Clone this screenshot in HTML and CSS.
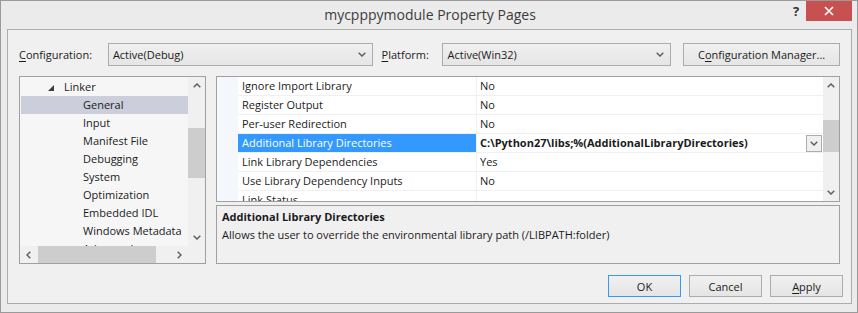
FILE: index.html
```html
<!DOCTYPE html>
<html lang="en">
<head>
  <meta charset="UTF-8" />
  <title>mycpppymodule Property Pages</title>
  <link rel="stylesheet" href="styles.css">
</head>
<body>
  <div class="window">
    <!-- Title bar -->
    <div class="titlebar">
      <div class="title">mycpppymodule Property Pages</div>
      <div class="help">?</div>
      <div class="close">
        <svg width="10" height="10" viewBox="0 0 10 10"><path d="M1 1 L9 9 M9 1 L1 9" stroke="#fff" stroke-width="1.6" fill="none"/></svg>
      </div>
    </div>

    <div class="client">
      <!-- Configuration / platform -->
      <div class="toolbar">
        <span class="lbl lbl-config"><u>C</u>onfiguration:</span>
        <div class="combo combo-config">
          <span>Active(Debug)</span>
          <svg class="chev" width="8" height="5"><use href="#chev-down"/></svg>
        </div>
        <span class="lbl lbl-platform"><u>P</u>latform:</span>
        <div class="combo combo-platform">
          <span>Active(Win32)</span>
          <svg class="chev" width="8" height="5"><use href="#chev-down"/></svg>
        </div>
        <div class="btn btn-manager">C<u>o</u>nfiguration Manager...</div>
      </div>

      <div class="main">
        <!-- Tree -->
        <div class="tree">
          <ul class="tree-list">
            <li class="node"><svg class="twisty" width="6" height="6" viewBox="0 0 6 6"><polygon points="6,0 6,6 0,6" fill="#3c3c3c"/></svg>Linker</li>
            <li class="leaf selected">General</li>
            <li class="leaf">Input</li>
            <li class="leaf">Manifest File</li>
            <li class="leaf">Debugging</li>
            <li class="leaf">System</li>
            <li class="leaf">Optimization</li>
            <li class="leaf">Embedded IDL</li>
            <li class="leaf">Windows Metadata</li>
            <li class="leaf">Advanced</li>
          </ul>
          <div class="vscroll tree-vscroll">
            <div class="arrow"><svg width="8" height="5"><use href="#chev-up"/></svg></div>
            <div class="thumb"></div>
            <div class="spacer"></div>
            <div class="arrow"><svg width="8" height="5"><use href="#chev-down"/></svg></div>
          </div>
          <div class="hscroll">
            <div class="arrow"><svg width="5" height="8"><use href="#chev-left"/></svg></div>
            <div class="thumb"></div>
            <div class="spacer"></div>
            <div class="arrow"><svg width="5" height="8"><use href="#chev-right"/></svg></div>
          </div>
          <div class="corner"></div>
        </div>

        <div class="right">
          <!-- Property grid -->
          <div class="props">
            <div class="prop-rows">
              <div class="row"><div class="gutter"></div><div class="name">Ignore Import Library</div><div class="value">No</div></div>
              <div class="row"><div class="gutter"></div><div class="name">Register Output</div><div class="value">No</div></div>
              <div class="row"><div class="gutter"></div><div class="name">Per-user Redirection</div><div class="value">No</div></div>
              <div class="row selected">
                <div class="gutter"></div>
                <div class="name">Additional Library Directories</div>
                <div class="value">
                  <span>C:\Python27\libs;%(AdditionalLibraryDirectories)</span>
                  <div class="drop"><svg width="8" height="5"><use href="#chev-down"/></svg></div>
                </div>
              </div>
              <div class="row"><div class="gutter"></div><div class="name">Link Library Dependencies</div><div class="value">Yes</div></div>
              <div class="row"><div class="gutter"></div><div class="name">Use Library Dependency Inputs</div><div class="value">No</div></div>
              <div class="row"><div class="gutter"></div><div class="name">Link Status</div><div class="value"></div></div>
            </div>
            <div class="vscroll props-vscroll">
              <div class="arrow"><svg width="8" height="5"><use href="#chev-up"/></svg></div>
              <div class="thumb"></div>
              <div class="spacer"></div>
              <div class="arrow"><svg width="8" height="5"><use href="#chev-down"/></svg></div>
            </div>
          </div>

          <!-- Description -->
          <div class="desc">
            <div class="desc-title">Additional Library Directories</div>
            <div class="desc-text">Allows the user to override the environmental library path (/LIBPATH:folder)</div>
          </div>
        </div>
      </div>

      <div class="actions">
        <div class="btn default">OK</div>
        <div class="btn">Cancel</div>
        <div class="btn"><u>A</u>pply</div>
      </div>
    </div>
  </div>

  <svg class="sprite">
    <symbol id="chev-down" viewBox="0 0 8 5"><polyline points="0.7,0.7 4,4 7.3,0.7" fill="none" stroke="#606060" stroke-width="1.5"/></symbol>
    <symbol id="chev-up" viewBox="0 0 8 5"><polyline points="0.7,4.3 4,1 7.3,4.3" fill="none" stroke="#606060" stroke-width="1.5"/></symbol>
    <symbol id="chev-left" viewBox="0 0 5 8"><polyline points="4.3,0.7 1,4 4.3,7.3" fill="none" stroke="#606060" stroke-width="1.5"/></symbol>
    <symbol id="chev-right" viewBox="0 0 5 8"><polyline points="0.7,0.7 4,4 0.7,7.3" fill="none" stroke="#606060" stroke-width="1.5"/></symbol>
  </svg>
</body>
</html>
```

FILE: styles.css
```css
:root {
  --frame: #ebebeb;
  --face: #f0f0f0;
  --border: #acacac;
  --panel-border: #a0a0a0;
  --text: #1b1b1b;
  --select: #3399ff;
  --thumb: #cdcdcd;
}

body {
  margin: 0;
  font-family: "Open Sans", "Noto Sans", sans-serif;
  font-size: 11px;
  color: var(--text);
}

u {
  text-decoration-thickness: 1px;
  text-underline-offset: 2px;
}

.sprite {
  display: none;
}

.window {
  width: 858px;
  height: 313px;
  box-sizing: border-box;
  border: 1px solid #9a9a9a;
  background: var(--frame);
  display: flex;
  flex-direction: column;
}

/* Title bar */
.titlebar {
  height: 28px;
  flex-shrink: 0;
  display: flex;
  align-items: flex-start;
}

.title {
  flex: 1;
  padding-left: 71px;
  text-align: center;
  font-size: 14px;
  line-height: 28px;
  color: #3c3c3c;
}

.help {
  width: 16px;
  margin-right: 2px;
  text-align: center;
  font-size: 13px;
  font-weight: 700;
  line-height: 20px;
  color: #333;
}

.close {
  width: 46px;
  height: 20px;
  margin-right: 5px;
  background: #c75050;
  display: flex;
  align-items: center;
  justify-content: center;
}

/* Client area */
.client {
  flex: 1;
  margin: 0 5px 8px 6px;
  border: 1px solid var(--border);
  background: var(--face);
  padding: 13px 11px 0 11px;
  display: flex;
  flex-direction: column;
}

.toolbar {
  display: flex;
  align-items: center;
  height: 23px;
}

.lbl-config { width: 89px; }
.lbl-platform { width: 61px; margin-left: 9px; }

.combo {
  height: 23px;
  box-sizing: border-box;
  border: 1px solid var(--border);
  background: linear-gradient(#f0f0f0, #e5e5e5);
  display: flex;
  align-items: center;
  justify-content: space-between;
  padding: 0 6px 0 4px;
}

.combo-config { width: 265px; }
.combo-platform { width: 229px; }

.btn {
  box-sizing: border-box;
  border: 1px solid var(--border);
  background: linear-gradient(#f0f0f0, #e5e5e5);
  display: flex;
  align-items: center;
  justify-content: center;
  width: 73px;
  height: 22px;
}

.btn-manager {
  width: 157px;
  height: 23px;
  margin-left: 12px;
}

.btn.default {
  border-color: var(--select);
}

.main {
  display: flex;
  gap: 10px;
  height: 188px;
  margin-top: 10px;
}

/* Tree */
.tree {
  width: 187px;
  box-sizing: border-box;
  border: 1px solid var(--panel-border);
  background: #f6f6f6;
  display: grid;
  grid-template-columns: 1fr 17px;
  grid-template-rows: 1fr 17px;
  overflow: hidden;
}

.tree-list {
  list-style: none;
  margin: 0;
  padding: 1px 0 0 1px;
  overflow: hidden;
  min-width: 0;
}

.tree-list li {
  height: 18px;
  line-height: 18px;
  white-space: nowrap;
}

.tree-list .node {
  padding-left: 27px;
}

.twisty {
  margin-right: 10px;
  vertical-align: 0;
}

.tree-list .leaf {
  padding-left: 62px;
}

.tree-list .selected {
  background: #cccedb;
}

.vscroll {
  background: var(--face);
  display: flex;
  flex-direction: column;
}

.vscroll .arrow {
  height: 17px;
  display: flex;
  align-items: center;
  justify-content: center;
}

.vscroll .spacer,
.hscroll .spacer {
  flex: 1;
}

.tree-vscroll .thumb {
  margin-top: 34px;
  height: 50px;
  background: var(--thumb);
}

.hscroll {
  background: var(--face);
  display: flex;
}

.hscroll .arrow {
  width: 17px;
  display: flex;
  align-items: center;
  justify-content: center;
}

.hscroll .thumb {
  margin-left: 1px;
  width: 118px;
  background: var(--thumb);
}

.corner {
  background: var(--face);
}

/* Property grid */
.right {
  flex: 1;
  display: flex;
  flex-direction: column;
  gap: 3px;
}

.props {
  height: 126px;
  box-sizing: border-box;
  border: 1px solid var(--panel-border);
  background: #fff;
  display: grid;
  grid-template-columns: 1fr 16px;
}

.prop-rows {
  overflow: hidden;
}

.row {
  display: grid;
  grid-template-columns: 21px 239px 1fr;
  height: 19px;
}

.gutter {
  background: #f4f7fc;
}

.name,
.value {
  border-bottom: 1px solid #f0f0f0;
  line-height: 18px;
  white-space: nowrap;
}

.name {
  border-right: 1px solid #f0f0f0;
  padding-left: 4px;
}

.value {
  padding-left: 3px;
  display: flex;
  align-items: center;
  justify-content: space-between;
}

.row.selected .name {
  background: var(--select);
  color: #fff;
}

.row.selected .value {
  font-weight: 700;
}

.drop {
  width: 16px;
  height: 17px;
  margin-right: 1px;
  box-sizing: border-box;
  border: 1px solid var(--border);
  background: #f0f0f0;
  display: flex;
  align-items: center;
  justify-content: center;
}

.props-vscroll .thumb {
  margin-top: 26px;
  height: 32px;
  background: var(--thumb);
}

/* Description */
.desc {
  flex: 1;
  box-sizing: border-box;
  border: 1px solid var(--panel-border);
  padding: 2px 5px;
  line-height: 18px;
}

.desc-title {
  font-weight: 700;
}

.actions {
  display: flex;
  justify-content: flex-end;
  gap: 8px;
  margin-top: 11px;
  margin-right: -3px;
}
```
